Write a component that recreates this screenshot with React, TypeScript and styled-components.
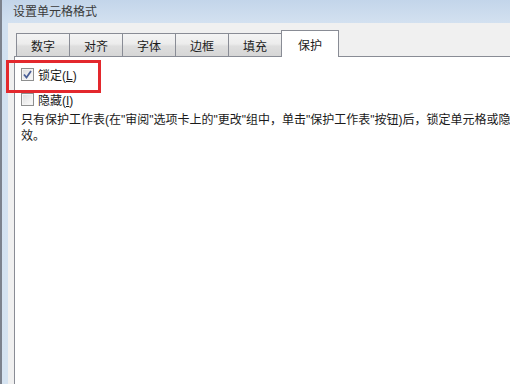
import React from "react";
import styled, { createGlobalStyle } from "styled-components";

const Global = createGlobalStyle`
  html, body { margin: 0; padding: 0; background: #ffffff; overflow: hidden; }
  body { font-family: "Liberation Sans", "Noto Sans CJK SC", sans-serif; }
`;

const Window = styled.div`
  position: relative;
  width: 510px;
  height: 384px;
  display: flex;
  overflow: hidden;
`;

const Frame = styled.div`
  width: 6px;
  flex: none;
  border-left: 2px solid #7c828d;
  background: linear-gradient(to bottom, #c3d5ea 0px, #d1e0f0 24px, #d5e3f1 100%);
`;

const Body = styled.div`
  flex: 1;
  display: flex;
  flex-direction: column;
  min-width: 0;
`;

const TitleBar = styled.div`
  height: 23px;
  flex: none;
  display: flex;
  align-items: center;
  padding-left: 5px;
  background: linear-gradient(to bottom, #c3d5ea, #d3e1f0);
  color: #3a3a3a;
  font-size: 12px;
  line-height: 14px;
`;

const Client = styled.div`
  flex: 1;
  display: flex;
  flex-direction: column;
  background: #f0f0f0;
  padding: 7px 0 0 6px;
`;

const TabStrip = styled.div`
  display: flex;
  align-items: flex-end;
  height: 26px;
  padding-left: 2px;
  position: relative;
  z-index: 1;
`;

const Tab = styled.div<{ $active?: boolean }>`
  box-sizing: border-box;
  width: ${(p) => (p.$active ? 58 : 54)}px;
  height: ${(p) => (p.$active ? 27 : 23)}px;
  margin-right: -1px;
  margin-bottom: ${(p) => (p.$active ? -1 : 0)}px;
  border: 1px solid #898c95;
  border-bottom: none;
  display: flex;
  align-items: center;
  justify-content: center;
  font-size: 12px;
  color: #1c1c1c;
  padding-top: ${(p) => (p.$active ? 0 : 1)}px;
  background: ${(p) =>
    p.$active
      ? "#ffffff"
      : "linear-gradient(to bottom, #f4f4f4 0%, #ececec 45%, #dedede 55%, #d6d6d6 100%)"};
  position: relative;
  z-index: ${(p) => (p.$active ? 2 : 1)};
`;

const Panel = styled.div`
  flex: 1;
  background: #ffffff;
  border-top: 1px solid #898c95;
  border-left: 1px solid #898c95;
  padding-top: 5px;
  overflow: hidden;
  display: flex;
  flex-direction: column;
`;

const Row = styled.label`
  height: 25px;
  display: flex;
  align-items: center;
  gap: 4px;
  padding-left: 6px;
  font-size: 12px;
  color: #1a1a1a;
`;

const Box = styled.span<{ $checked?: boolean }>`
  box-sizing: border-box;
  width: 13px;
  height: 13px;
  flex: none;
  border: 1px solid #8e8f8f;
  background: linear-gradient(135deg, #dcdcdc 0%, #f0f0f0 60%, #fbfbfb 100%);
  box-shadow: inset 0 0 0 1px #f4f4f4;
  display: flex;
  align-items: center;
  justify-content: center;
`;

const Underline = styled.span`
  text-decoration: underline;
`;

const Note = styled.p`
  margin: 0;
  padding-left: 6px;
  font-size: 12px;
  line-height: 16px;
  color: #1a1a1a;
  white-space: nowrap;
`;

const Highlight = styled.div`
  position: absolute;
  left: 6px;
  top: 60px;
  width: 95px;
  height: 33px;
  box-sizing: border-box;
  border: 3px solid #e3282d;
  pointer-events: none;
`;

const Check = () => (
  <svg width="9" height="9" viewBox="0 0 9 9">
    <path d="M1 4.5 L3.5 7.5 L8 1" fill="none" stroke="#4a5f97" strokeWidth="1.8" />
  </svg>
);

const tabs = ["数字", "对齐", "字体", "边框", "填充", "保护"];

export default function App() {
  return (
    <>
      <Global />
      <Window>
        <Frame />
        <Body>
          <TitleBar>设置单元格格式</TitleBar>
          <Client>
            <TabStrip>
              {tabs.map((t) => (
                <Tab key={t} $active={t === "保护"}>
                  {t}
                </Tab>
              ))}
            </TabStrip>
            <Panel>
              <Row>
                <Box $checked>
                  <Check />
                </Box>
                <span>
                  锁定(<Underline>L</Underline>)
                </span>
              </Row>
              <Row>
                <Box />
                <span>
                  隐藏(<Underline>I</Underline>)
                </span>
              </Row>
              <Note>
                只有保护工作表(在"审阅"选项卡上的"更改"组中，单击"保护工作表"按钮)后，锁定单元格或隐藏公式才有
                <br />
                效。
              </Note>
            </Panel>
          </Client>
        </Body>
        <Highlight />
      </Window>
    </>
  );
}
